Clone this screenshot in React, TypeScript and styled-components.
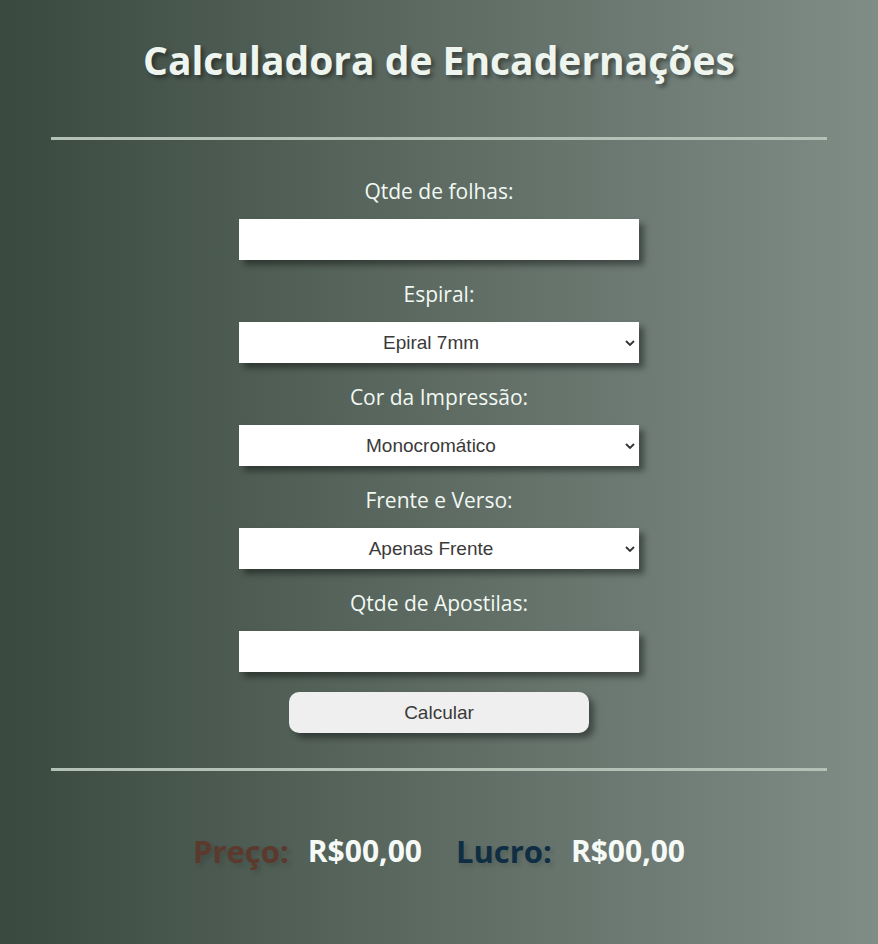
import * as React from "react";
import styled, { createGlobalStyle } from "styled-components";

const GlobalStyle = createGlobalStyle`
  html, body {
    margin: 0;
    padding: 0;
  }
  body {
    min-height: 944px;
    background: linear-gradient(to right, #3a493f, #808d87);
    font-family: "Open Sans", "DejaVu Sans", sans-serif;
  }
`;

const Page = styled.main`
  box-sizing: border-box;
  width: 100%;
  padding: 0 51px;
  display: flex;
  flex-direction: column;
  align-items: center;
`;

const Title = styled.h1`
  margin: 34px 0 0;
  font-size: 39px;
  line-height: 52px;
  font-weight: 700;
  color: #eef5ee;
  text-shadow: 3px 3px 4px rgba(0, 0, 0, 0.4);
`;

const Rule = styled.hr<{ $top: number }>`
  width: 100%;
  height: 3px;
  margin: ${(p) => p.$top}px 0 0;
  border: 0;
  background: #b4c1b7;
`;

const Form = styled.form`
  display: flex;
  flex-direction: column;
  align-items: center;
  margin-top: 39px;
`;

const Label = styled.label`
  font-size: 21px;
  line-height: 24px;
  font-weight: 500;
  color: #f2f8f2;
  text-align: center;
`;

const fieldCss = `
  box-sizing: border-box;
  width: 400px;
  height: 41px;
  margin: 16px 0 22px;
  border: 0;
  background: #ffffff;
  box-shadow: 5px 5px 6px rgba(0, 0, 0, 0.4);
  font-family: "Liberation Sans", Arial, sans-serif;
  font-size: 19px;
  color: #3a3a3a;
  text-align: center;
  text-align-last: center;
  outline: none;
`;

const Input = styled.input`
  ${fieldCss}
`;

const Select = styled.select`
  ${fieldCss}
  appearance: none;
  padding: 0 16px 0 0;
  background: #ffffff
    url("data:image/svg+xml;utf8,<svg xmlns='http://www.w3.org/2000/svg' width='10' height='6' viewBox='0 0 10 6'><path d='M1 1l4 4 4-4' fill='none' stroke='%23333' stroke-width='1.8'/></svg>")
    no-repeat right 4px center;
`;

const Button = styled.button`
  width: 300px;
  height: 41px;
  margin-top: -2px;
  border: 0;
  border-radius: 10px;
  background: #efefef;
  box-shadow: 5px 5px 6px rgba(0, 0, 0, 0.4);
  font-family: "Liberation Sans", Arial, sans-serif;
  font-size: 19px;
  color: #3a3a3a;
  cursor: pointer;
`;

const Results = styled.div`
  margin-top: 62px;
  display: flex;
  align-items: baseline;
  gap: 34px;
  font-size: 30px;
  line-height: 36px;
  font-weight: 700;
`;

const Result = styled.p`
  margin: 0;
  display: flex;
  gap: 19px;
`;

const ResultLabel = styled.span<{ $color: string }>`
  color: ${(p) => p.$color};
  font-size: 31px;
  text-shadow: 3px 3px 5px rgba(0, 0, 0, 0.15);
`;

const ResultValue = styled.span`
  color: #f6faf6;
`;

const fields = [
  { label: "Qtde de folhas:", kind: "input" },
  { label: "Espiral:", kind: "select", value: "Epiral 7mm" },
  { label: "Cor da Impressão:", kind: "select", value: "Monocromático" },
  { label: "Frente e Verso:", kind: "select", value: "Apenas Frente" },
  { label: "Qtde de Apostilas:", kind: "input" },
];

export default function App() {
  return (
    <>
      <GlobalStyle />
      <Page>
        <Title>Calculadora de Encadernações</Title>
        <Rule $top={51} />
        <Form onSubmit={(e) => e.preventDefault()}>
          {fields.map((f) => (
            <React.Fragment key={f.label}>
              <Label>{f.label}</Label>
              {f.kind === "input" ? (
                <Input type="number" />
              ) : (
                <Select defaultValue={f.value}>
                  <option>{f.value}</option>
                </Select>
              )}
            </React.Fragment>
          ))}
          <Button type="submit">Calcular</Button>
        </Form>
        <Rule $top={35} />
        <Results>
          <Result>
            <ResultLabel $color="#5c392d">Preço:</ResultLabel>
            <ResultValue>R$00,00</ResultValue>
          </Result>
          <Result>
            <ResultLabel $color="#0f2e44">Lucro:</ResultLabel>
            <ResultValue>R$00,00</ResultValue>
          </Result>
        </Results>
      </Page>
    </>
  );
}
